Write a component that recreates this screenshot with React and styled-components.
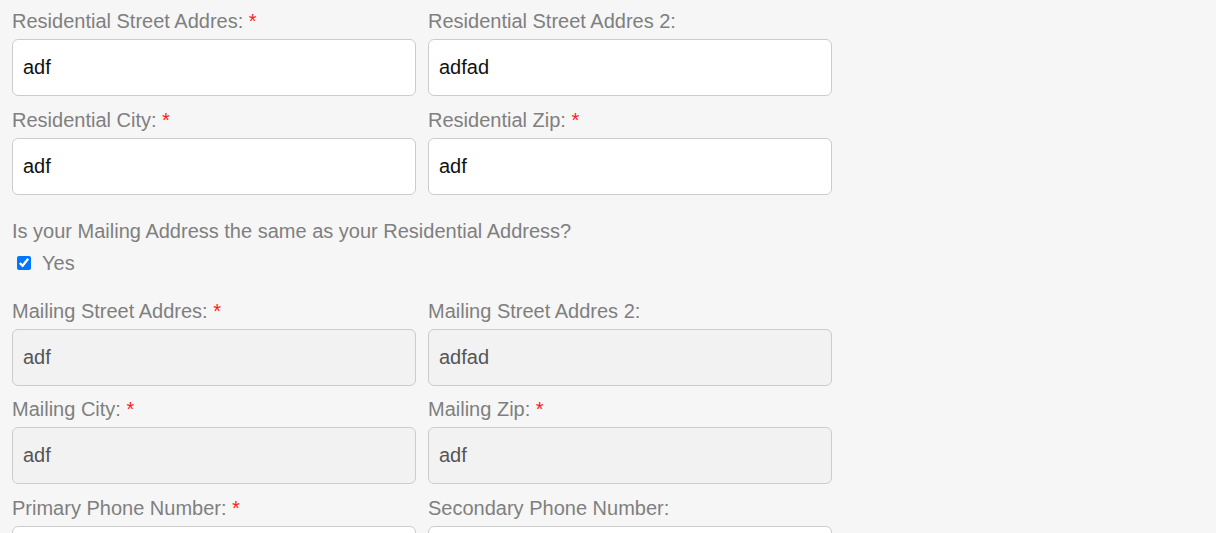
import styled, { createGlobalStyle } from "styled-components";

const GlobalStyle = createGlobalStyle`
    html, body {
        margin: 0;
        padding: 0;
        background: #f6f6f6;
        font-family: "Liberation Sans", Arial, sans-serif;
    }
`

const residential = [
    { label: 'Residential Street Addres:', value: 'adf', required: true },
    { label: 'Residential Street Addres 2:', value: 'adfad' },
    { label: 'Residential City:', value: 'adf', required: true },
    { label: 'Residential Zip:', value: 'adf', required: true },
]

const mailing = [
    { label: 'Mailing Street Addres:', value: 'adf', required: true },
    { label: 'Mailing Street Addres 2:', value: 'adfad' },
    { label: 'Mailing City:', value: 'adf', required: true },
    { label: 'Mailing Zip:', value: 'adf', required: true },
]

const phones = [
    { label: 'Primary Phone Number:', value: '', required: true },
    { label: 'Secondary Phone Number:', value: '' },
]

const Field = ({ label, value, required, locked }) => (
    <Group>
        <Label>
            {label}{required && <Star> *</Star>}
        </Label>
        <Input value={value} readOnly disabled={locked} />
    </Group>
)

const App = () => {
    return (
        <Page>
            <GlobalStyle />
            <Grid>
                {residential.map(f => <Field key={f.label} {...f} />)}
            </Grid>
            <Question>
                <p>Is your Mailing Address the same as your Residential Address?</p>
                <Check>
                    <input type="checkbox" checked readOnly />
                    Yes
                </Check>
            </Question>
            <Grid>
                {mailing.map(f => <Field key={f.label} {...f} locked />)}
                {phones.map(f => <Field key={f.label} {...f} />)}
            </Grid>
        </Page>
    );
}

const Page = styled.div`
    padding: 10px 12px 0;
    width: 820px;
    height: 523px;
    overflow: hidden;
`
const Grid = styled.div`
    display: grid;
    grid-template-columns: 404px 404px;
    column-gap: 12px;
`
const Group = styled.div`
    display: flex;
    flex-direction: column;
    margin-bottom: 12.5px;
`
const Label = styled.label`
    font-size: 20px;
    line-height: 23px;
    color: #7f7f7f;
    margin-bottom: 6px;
`
const Star = styled.span`
    color: #ff1a1a;
`
const Input = styled.input`
    box-sizing: border-box;
    width: 100%;
    height: 57px;
    padding: 0 10px;
    border: 1px solid #cccccc;
    border-radius: 6px;
    background: #ffffff;
    font-family: "Liberation Sans", Arial, sans-serif;
    font-size: 20px;
    color: #111111;
    outline: none;
    &:disabled{
        background: #f2f2f2;
        color: #555555;
        opacity: 1;
    }
`
const Question = styled.div`
    padding: 12.5px 0 25px;
    p{
        margin: 0;
        font-size: 20px;
        line-height: 23px;
        color: #7f7f7f;
    }
`
const Check = styled.label`
    display: flex;
    align-items: center;
    gap: 11px;
    margin-top: 9px;
    font-size: 20px;
    line-height: 23px;
    color: #7f7f7f;
    input{
        width: 14px;
        height: 14px;
        margin: 0 0 0 5px;
        accent-color: #0075ff;
    }
`

export default App;
